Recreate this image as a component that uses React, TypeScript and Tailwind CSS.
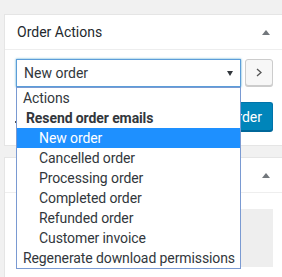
import React from "react";

const Tri = ({ up, className }: { up?: boolean; className?: string }) => (
  <svg width="8" height="5" viewBox="0 0 8 5" className={className}>
    {up ? <path d="M4 0 L8 5 L0 5 Z" fill="currentColor" /> : <path d="M0 0 L8 0 L4 5 Z" fill="currentColor" />}
  </svg>
);

export default function App() {
  const sub = ["Cancelled order", "Processing order", "Completed order", "Refunded order", "Customer invoice"];
  return (
    <div
      className="relative w-[282px] h-[277px] overflow-hidden bg-[#f1f1f1] pt-[14px] pl-[4px] flex flex-col text-[14px] text-[#32373c]"
      style={{ fontFamily: "Roboto, 'Noto Sans', sans-serif" }}
    >
      {/* Panel 1 */}
      <div className="h-[132px] shrink-0 bg-white border border-r-0 border-[#e5e5e5] flex flex-col">
        <div className="h-[35px] shrink-0 border-b border-[#eee] flex items-center justify-between pl-[12px] pr-[12px]">
          <span className="text-[14px] text-[#23282d] leading-none">Order Actions</span>
          <Tri up className="text-[#72777c]" />
        </div>
        <div className="pt-[9px] pl-[11px] pr-[9px] flex flex-col">
          <div className="flex gap-[4px]">
            <div className="w-[225px] h-[28px] border border-[#5b9dd9] shadow-[0_0_2px_rgba(30,140,190,0.8)] flex items-center justify-between pl-[7px] pr-[7px]">
              <span className="leading-none">New order</span>
              <svg width="6" height="5" viewBox="0 0 6 5" className="text-[#32373c]">
                <path d="M0 0 L6 0 L3 5 Z" fill="currentColor" />
              </svg>
            </div>
            <div className="w-[28px] h-[27px] border border-[#ccc] rounded-[3px] bg-[#f7f7f7] shadow-[0_1px_0_#ccc] flex items-center justify-center">
              <svg width="6" height="9" viewBox="0 0 6 9">
                <path d="M1 1 L5 4.5 L1 8" stroke="#555" strokeWidth="1.3" fill="none" />
              </svg>
            </div>
          </div>
          <div className="mt-[15px] flex items-center justify-between">
            <span className="ml-[-1px] w-[2px] h-[2px] bg-[#555] mt-[10px]" />
            <div className="h-[29px] px-[10px] rounded-[3px] bg-[#0085ba] border border-[#0073aa] border-b-[#006799] shadow-[0_1px_0_#006799] text-white flex items-center leading-none">
              Save order
            </div>
          </div>
        </div>
      </div>

      {/* Panel 2 */}
      <div className="mt-[11px] flex-1 bg-white border border-r-0 border-b-0 border-[#e5e5e5] flex flex-col">
        <div className="h-[35px] shrink-0 border-b border-[#eee] flex items-center justify-end pl-[12px] pr-[12px]">
          <Tri up className="text-[#72777c]" />
        </div>
        <div className="pt-[16px] pl-[11px] pr-[9px]">
          <div className="h-[58px] bg-[#eee]" />
        </div>
      </div>

      {/* Open dropdown list */}
      <div className="absolute left-[16px] top-[87px] w-[225px] h-[182px] border border-[#7a9ad2] bg-white flex flex-col text-[#32373c] tracking-[-0.1px]">
        <div className="h-[20px] flex items-center pl-[6px]">Actions</div>
        <div className="h-[20px] flex items-center pl-[9px] font-bold">Resend order emails</div>
        <div className="h-[20px] flex items-center pl-[22px] bg-[#1e90ff] text-white">New order</div>
        {sub.map((s) => (
          <div key={s} className="h-[20px] flex items-center pl-[22px]">
            {s}
          </div>
        ))}
        <div className="h-[20px] flex items-center pl-[6px] whitespace-nowrap">Regenerate download permissions</div>
      </div>
    </div>
  );
}
